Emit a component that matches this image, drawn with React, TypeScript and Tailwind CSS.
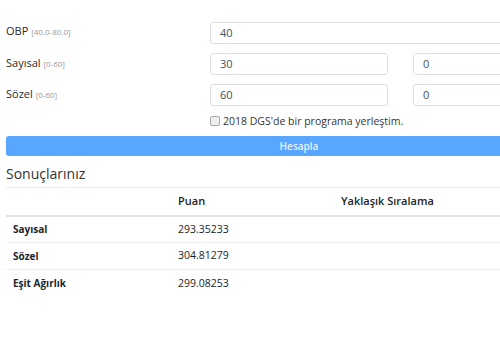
import React from 'react';

const rows = [
    { name: 'Sayısal', puan: '293.35233' },
    { name: 'Sözel', puan: '304.81279' },
    { name: 'Eşit Ağırlık', puan: '299.08253' },
];

function Field({ value }: { value: string }) {
    return (
        <input
            readOnly
            value={value}
            className="h-[22px] w-full rounded-[3px] border border-[#dde1e5] bg-white px-[9px] text-[11px] text-[#495057] outline-none"
        />
    );
}

function Label({ name, range }: { name: string; range: string }) {
    return (
        <div className="w-[204px] shrink-0 text-[11px] text-[#2b2b2b]">
            {name} <span className="text-[8px] text-[#999]">{range}</span>
        </div>
    );
}

export default function App() {
    return (
        <div className="h-[350px] w-[500px] overflow-hidden bg-white" style={{ fontFamily: '"Open Sans", sans-serif' }}>
            <div className="w-[598px] px-[6px] pt-[19px]">
                <div className="flex flex-col gap-[9px]">
                    <div className="flex items-center">
                        <Label name="OBP" range="[40.0-80.0]" />
                        <div className="w-[381px]">
                            <Field value="40" />
                        </div>
                    </div>
                    <div className="flex items-center">
                        <Label name="Sayısal" range="[0-60]" />
                        <div className="flex w-[381px] gap-[25px]">
                            <Field value="30" />
                            <Field value="0" />
                        </div>
                    </div>
                    <div className="flex items-center">
                        <Label name="Sözel" range="[0-60]" />
                        <div className="flex w-[381px] gap-[25px]">
                            <Field value="60" />
                            <Field value="0" />
                        </div>
                    </div>
                </div>

                <div className="mt-[8px] flex items-center gap-[3px] pl-[204px] text-[10.5px] text-[#333]">
                    <span className="h-[10px] w-[10px] rounded-[2px] border border-[#aaa] bg-[#eee]" />
                    <span>2018 DGS'de bir programa yerleştim.</span>
                </div>

                <button className="mt-[7px] h-[20px] w-full rounded-[3px] bg-[#58a6ff] text-[10px] font-semibold text-[#e6f1ff]">
                    Hesapla
                </button>

                <h3 className="mt-[8px] text-[14px] leading-[20px] text-[#333]">Sonuçlarınız</h3>

                <table className="mt-[3px] w-full border-collapse text-[10px] text-[#212529]">
                    <thead>
                        <tr className="border-t border-[#eceef1]">
                            <th className="h-[28px] w-[164px] border-b-2 border-[#dee2e6] px-[7px] py-0 text-left font-semibold"></th>
                            <th className="w-[163px] border-b-2 border-[#dee2e6] px-[8px] text-left text-[11px] font-semibold">Puan</th>
                            <th className="border-b-2 border-[#dee2e6] px-[8px] text-left text-[11px] font-semibold">Yaklaşık Sıralama</th>
                        </tr>
                    </thead>
                    <tbody>
                        {rows.map((r, i) => (
                            <tr key={r.name} className={i < rows.length - 1 ? 'border-b border-[#eceef1]' : ''}>
                                <td className="h-[27px] px-[7px] font-bold">{r.name}</td>
                                <td className="px-[8px] text-[10.5px]">{r.puan}</td>
                                <td className="px-[8px]"></td>
                            </tr>
                        ))}
                    </tbody>
                </table>
            </div>
        </div>
    );
}
